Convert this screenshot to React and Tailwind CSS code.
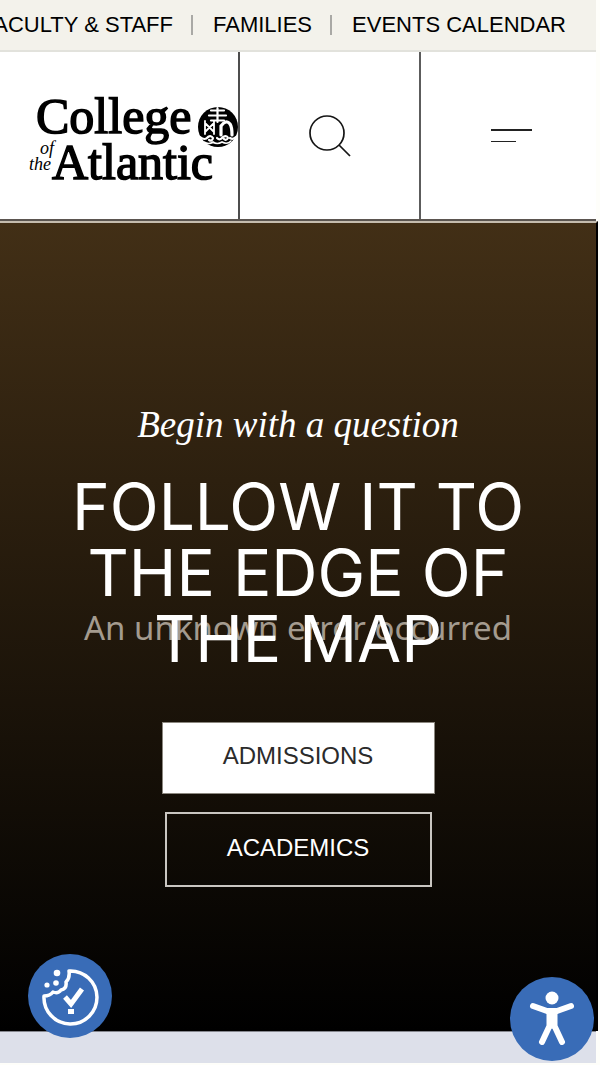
const navLinks = ["Faculty & Staff", "Families", "Events Calendar"];

function TopNav() {
  return (
    <nav
      aria-label="Audience"
      className="mr-1 flex h-[52px] items-center justify-end overflow-hidden border-b-2 border-[#e2e2dc] bg-[#f3f2eb] pr-[30px]"
    >
      {navLinks.map((label, i) => (
        <div key={label} className="flex shrink-0 items-center">
          {i > 0 && <span className="mr-5 ml-[18px] h-5 w-0.5 bg-[#a9a9a5]" />}
          <a
            href="#"
            className="whitespace-nowrap font-['Liberation_Sans',sans-serif] text-[22px] leading-6 text-black uppercase"
          >
            {label}
          </a>
        </div>
      ))}
    </nav>
  );
}

function Logo() {
  return (
    <svg viewBox="0 0 210 96" className="h-24 w-[210px] shrink-0" role="img" aria-label="College of the Atlantic">
      <g fill="#000" fontFamily="'Liberation Serif', serif">
        <g fontSize="50" stroke="#000" strokeWidth="1.5">
          <text x="8" y="45">College</text>
          <text x="24" y="91">Atlantic</text>
        </g>
        <text x="12" y="66" fontSize="18" fontStyle="italic">of</text>
        <text x="1" y="82" fontSize="18" fontStyle="italic">the</text>
      </g>
      <circle cx="190" cy="39" r="20" fill="#000" />
      <g fill="none" stroke="#fff" strokeWidth="2.2" strokeLinecap="round">
        <path d="M189.500 20v14M183 22.500h13M181 27.500h17M183 32.500h13" />
        <path d="M177 33v13M186 33v13M177 35l9 9M186 35l-9 9" strokeWidth="1.800" />
        <path d="M193 47V38q5-7 9-2 2 3 2 11" strokeWidth="3.200" />
        <path d="M172 49q5 4 8 0 3-2 5 1-1 4-4 2M189 50q3 3 6-1 4-2 5 1-2 3-4 1M202 50q3 2 6-1" />
        <path d="M176 54q5 3 9 0 4 3 9 0 5 3 9-1" strokeWidth="1.600" />
      </g>
    </svg>
  );
}

function Header() {
  return (
    <header className="mr-1 grid h-[169px] grid-cols-[240fr_181fr_175fr] border-b-2 border-[#5b5550] bg-white">
      <a href="#" className="flex min-w-0 items-center justify-end border-r-2 border-[#4d4d4d]">
        <Logo />
      </a>
      <button aria-label="Search" className="flex items-center justify-center border-r-2 border-[#5c5c5c]">
        <svg viewBox="0 0 42 42" className="size-[42px]" fill="none" stroke="#151515" strokeWidth="1.7">
          <circle cx="18" cy="18" r="17" />
          <path d="M30 30l11 11" />
        </svg>
      </button>
      <button aria-label="Menu" className="flex flex-col items-start justify-center gap-[10px] pl-[70px]">
        <span className="h-0.5 w-[41px] bg-[#222]" />
        <span className="h-px w-[25px] bg-[#222]" />
      </button>
    </header>
  );
}

function Hero() {
  return (
    <main className="mr-0.5 flex flex-1 flex-col items-center border-t-2 border-r-2 border-t-[#c5bcae] border-r-black bg-linear-to-b/srgb from-[#422f16] to-black pt-[177px] text-center text-white">
      <p className="font-['Liberation_Serif',serif] text-[37px] leading-[50px] italic">
        Begin with a question
      </p>
      <div className="relative mt-6 w-full">
        <p className="absolute inset-x-0 top-[134px] font-['Noto_Sans',sans-serif] text-[33px] leading-10 text-[#a49b8f]">
          An unknown error occurred
        </p>
        <h1 className="relative mx-auto max-w-[480px] font-[Inter,sans-serif] text-[64px] leading-[66px] font-normal uppercase">
          Follow it to the edge of the map
        </h1>
      </div>
      <div className="mt-[50px] flex flex-col items-center gap-[18px] pb-36 font-['Liberation_Sans',sans-serif] text-2xl">
        <a
          href="#"
          className="flex h-[72px] w-[273px] items-center justify-center border border-[#8b877f] bg-white pb-1 text-[#2b2b2b] uppercase"
        >
          Admissions
        </a>
        <a
          href="#"
          className="flex h-[75px] w-[267px] items-center justify-center border-2 border-[#c9c6c1] pb-1 uppercase"
        >
          Academics
        </a>
      </div>
    </main>
  );
}

function CookieButton() {
  return (
    <button
      aria-label="Cookie preferences"
      className="absolute bottom-[27px] left-7 size-[84px] rounded-full bg-[#396cb7]"
    >
      <svg viewBox="0 0 84 84" className="size-full" fill="none" stroke="#fff">
        <path
          d="M41 17A26.500 26.500 0 1 1 16 42Q22 42 25 38Q30 40 33 36Q39 35 38 28Q42 24 41 17Z"
          strokeWidth="3.500"
          strokeLinejoin="round"
        />
        <path d="M37 43l6 7 11-15" strokeWidth="5" />
        <g fill="#fff" stroke="none">
          <rect x="40" y="55" width="6" height="5" />
          <circle cx="29" cy="19" r="3.300" />
          <circle cx="28" cy="29" r="2.800" />
          <circle cx="19" cy="31" r="2.600" />
        </g>
      </svg>
    </button>
  );
}

function AccessibilityButton() {
  return (
    <button
      aria-label="Accessibility options"
      className="absolute right-1.5 bottom-1 size-[84px] rounded-full bg-[#396cb7]"
    >
      <svg viewBox="0 0 84 84" className="size-full">
        <circle cx="42" cy="21" r="6.500" fill="#fff" />
        <g fill="none" stroke="#fff" strokeLinecap="round" strokeLinejoin="round">
          <path d="M23 29l14 5h10l14-5" strokeWidth="6" />
          <path d="M39.500 35h5v14l7.500 16M39.500 35v14l-7.500 16" strokeWidth="6" />
        </g>
        <path d="M37 34h10v14l-5 4-5-4z" fill="#fff" />
      </svg>
    </button>
  );
}

export default function App() {
  return (
    <div className="relative flex min-h-screen flex-col overflow-hidden bg-[#fefefa]">
      <TopNav />
      <Header />
      <Hero />
      <footer className="mr-1 mb-0.5 h-8 border-t border-[#85878e] bg-[#dde0ea]" />
      <CookieButton />
      <AccessibilityButton />
    </div>
  );
}
